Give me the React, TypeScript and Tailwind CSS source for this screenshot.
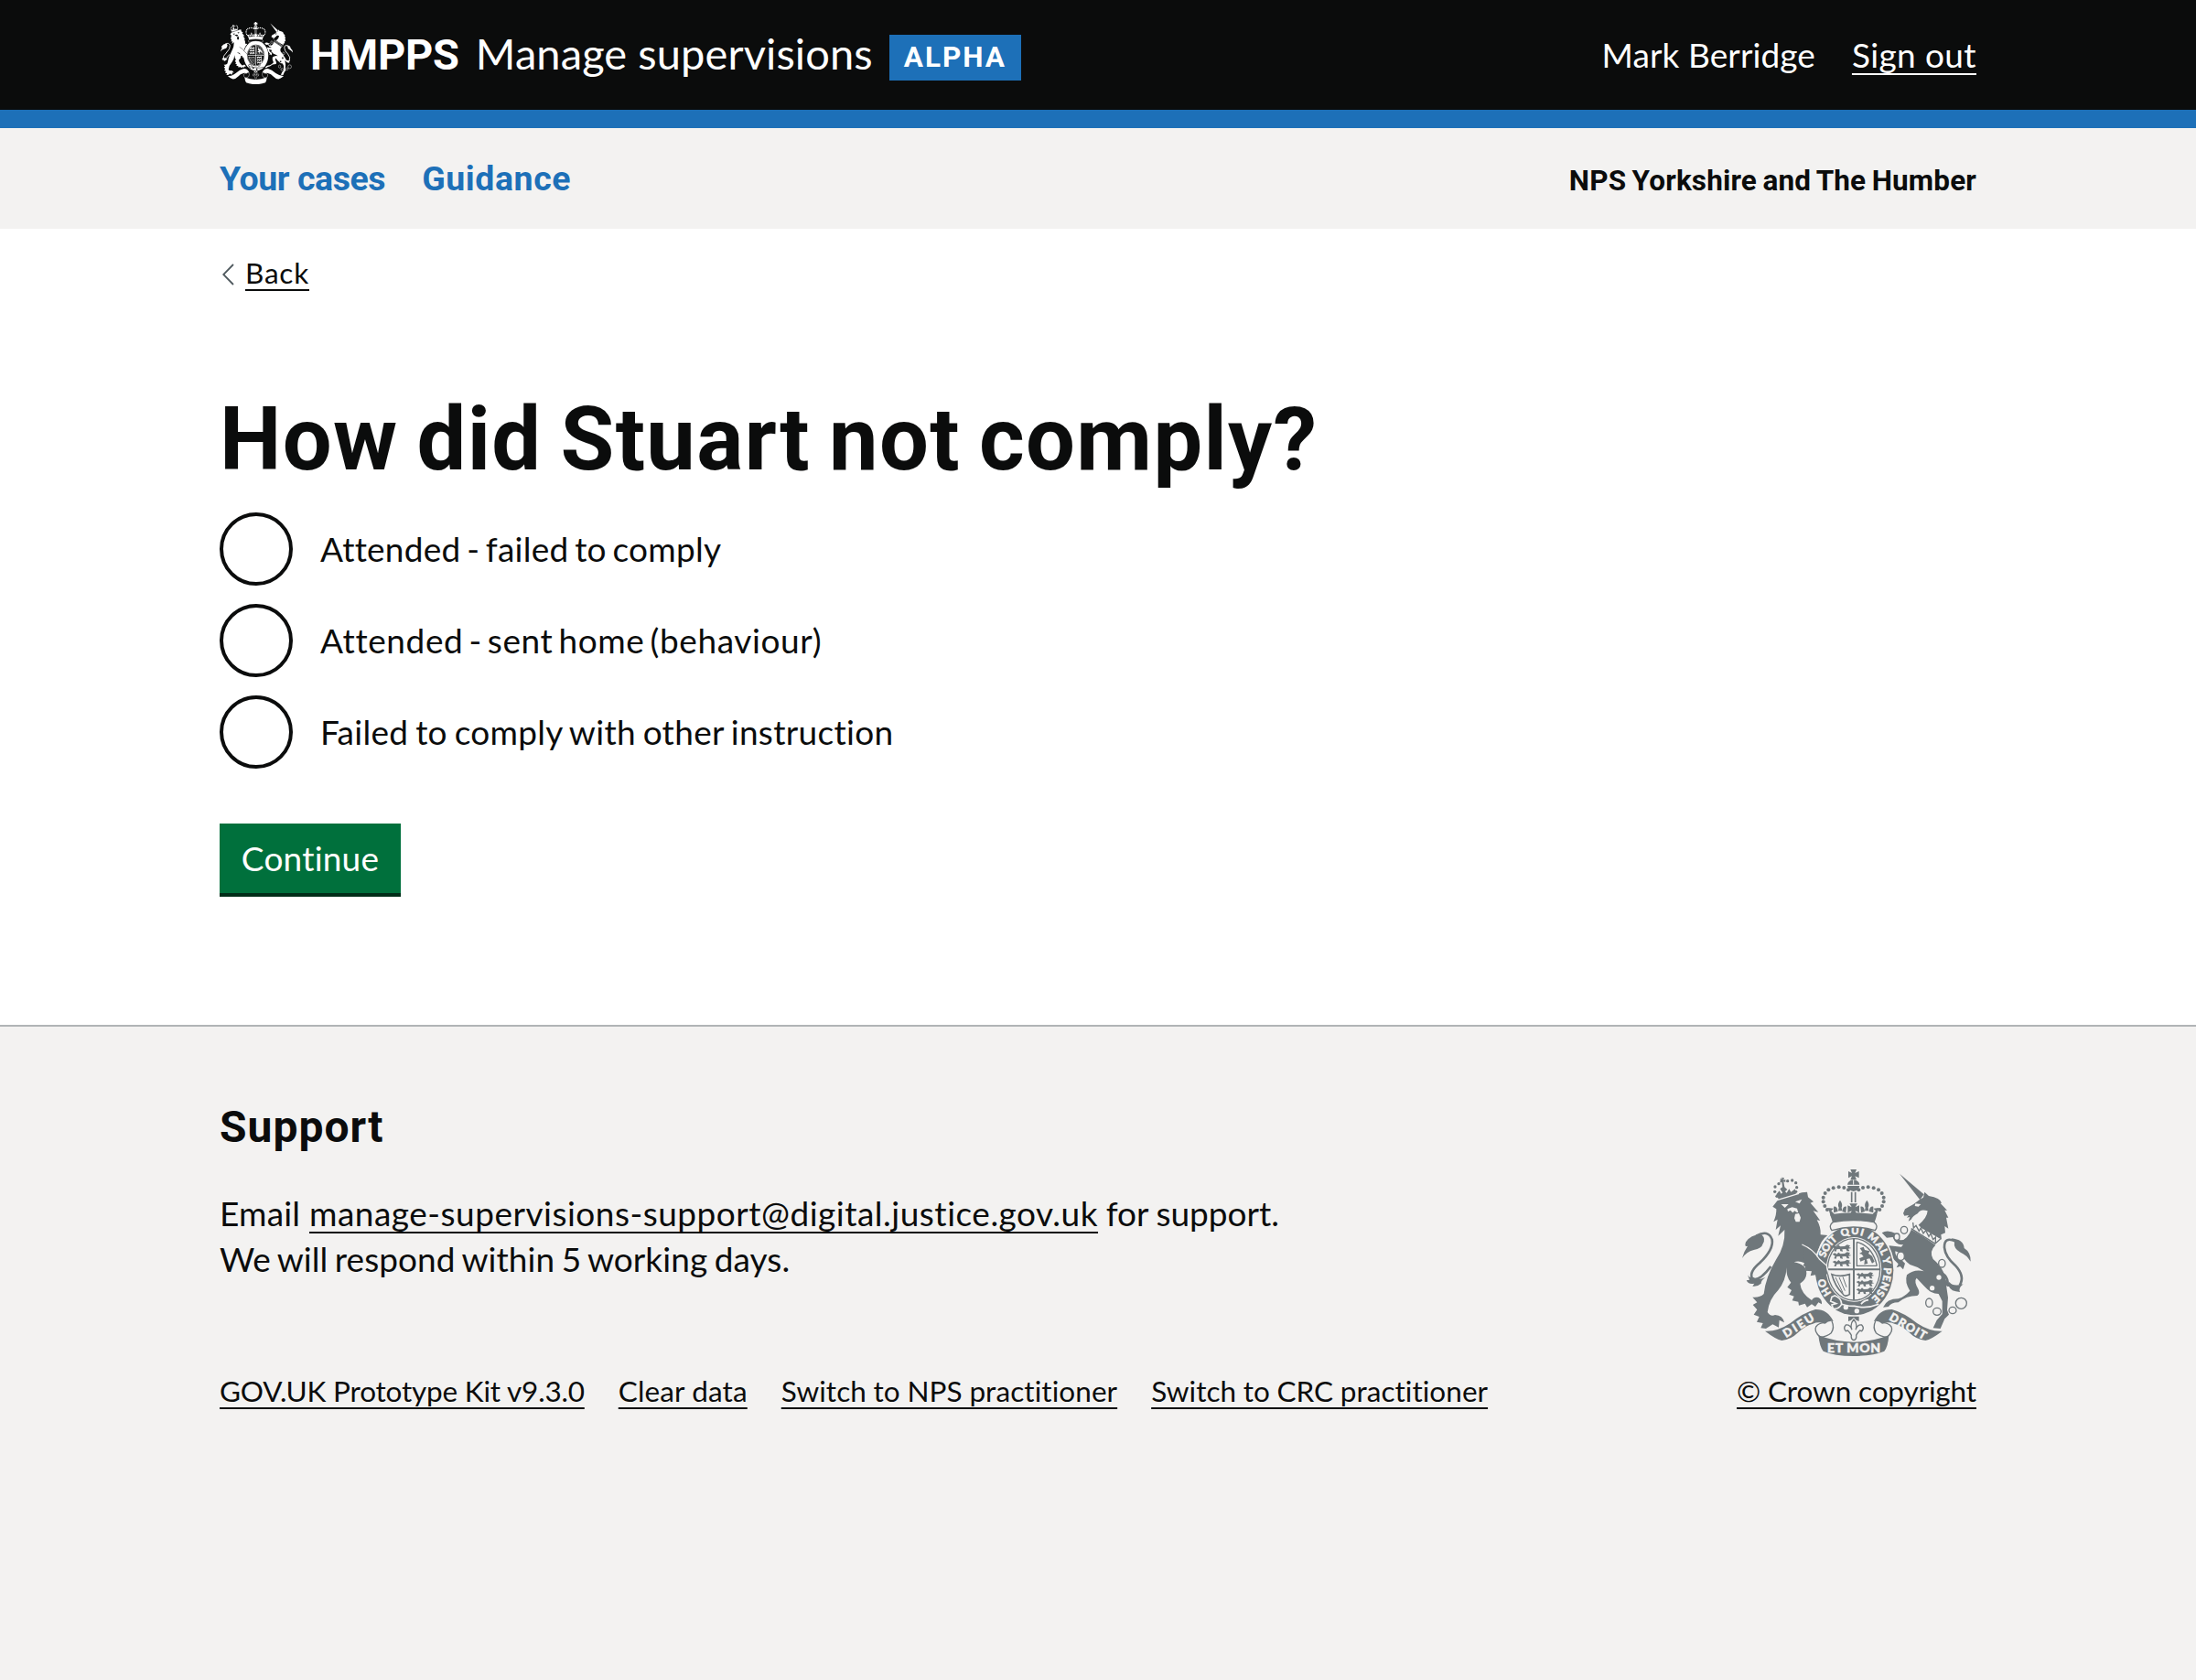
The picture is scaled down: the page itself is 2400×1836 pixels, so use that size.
import React from "react";

const LATO = "font-['Lato',sans-serif] [font-variant-ligatures:none]";
const ROBOTO = "font-['Roboto',sans-serif] font-bold";
const LINK = "underline decoration-2 underline-offset-[6px] [text-decoration-skip-ink:none]";

const ARCH_BEADS: [number, number][] = [
  [420, 121], [406, 114], [389, 112], [371, 115], [355, 121], [344, 132], [338, 146], [338, 160], [343, 174], [351, 186],
];
const SMALL_BEADS: [number, number][] = [
  [186, 142], [179, 127], [180, 111], [192, 101], [221, 92], [236, 90], [248, 98], [251, 113], [248, 127],
];

function Passant({ y }: { y: number }) {
  return (
    <path
      transform={`translate(0 ${y})`}
      d="M0 8 L8 4 L14 8 L20 2 L26 7 L40 6 L48 1 L58 4 L54 9 L62 12 L52 14 L56 22 L48 22 L44 15 L32 16 L34 23 L26 22 L24 15 L14 16 L12 23 L5 22 L9 14 Z"
    />
  );
}

function HalfCrown() {
  return (
    <g>
      {ARCH_BEADS.map(([x, y]) => (
        <circle key={`${x}-${y}`} cx={x} cy={y} r="6" />
      ))}
      <path d="M393 155 Q403 168 398 179 L400 190 L387 190 L389 179 Q383 168 393 155Z" />
      <path d="M372 176 Q384 174 386 192 L372 196Z M414 176 Q402 174 400 192 L412 196Z" />
      <path d="M354 180 L372 182 L364 190 L374 200 L362 206Z" />
    </g>
  );
}

function HalfRibbon({ fg, bg }: { fg: string; bg: string }) {
  return (
    <g>
      <path
        d="M366 552 Q376 572 364 590 Q350 602 328 604 Q306 584 314 570 Q324 556 344 557"
        fill={bg}
        stroke={fg}
        strokeWidth="4"
      />
      <path
        fill={fg}
        d="M147 584 Q188 586 230 558 Q272 524 312 513 Q352 512 371 552 Q356 548 344 560 Q322 552 304 560 Q280 566 256 588 Q232 612 202 615 Q184 612 147 584Z"
      />
    </g>
  );
}

function Crest({ fg, bg, lettered, className }: { fg: string; bg: string; lettered: boolean; className: string }) {
  const id = lettered ? "garter-lettered" : "garter-plain";
  return (
    <svg
      className={className}
      viewBox={lettered ? "60 45 780 630" : "72 54 750 611"}
      preserveAspectRatio="none"
      fill={fg}
      aria-hidden="true"
    >
      <defs>
        <path id={id} d="M438 497 A99 115 0 0 1 438 267 A99 115 0 0 1 438 497" />
      </defs>

      {/* small crown on the lion */}
      {SMALL_BEADS.map(([x, y]) => (
        <circle key={`${x}-${y}`} cx={x} cy={y} r="5" />
      ))}
      <path d="M198 82 L203 88 L202 80 L210 82 L207 89 L214 87 L214 96 L208 94 L211 112 L220 120 L206 132 L196 118 L204 112 L202 95 L196 98Z" />
      <path d="M184 136 L194 124 L200 134 L210 124 L218 131 L226 118 L232 128 L246 118 L247 132 L254 138 L192 153Z" />

      {/* lion */}
      <path d="M172 176 L190 153 L268 130 L285 128 L288 145 L306 160 L296 164 L322 194 L305 190 L328 222 L317 220 Q331 244 329 268 L352 270 Q330 286 322 318 L300 380 L280 386 L288 374 L272 370 L276 361 Q258 352 242 358 Q284 366 283 395 Q282 415 262 428 Q265 460 300 483 Q308 470 322 474 Q334 480 333 496 L322 490 L312 504 L300 496 L285 506 L278 494 L258 500 L256 488 L236 484 L242 470 L226 464 L234 450 L220 440 L232 425 Q215 405 218 376 Q215 420 190 450 Q160 480 155 522 Q165 538 180 531 Q205 532 210 556 L194 548 L192 572 L172 562 L150 576 L133 574 L140 558 L120 554 L128 537 L110 530 L121 514 L107 498 L121 490 L106 473 Q130 475 143 462 Q150 405 182 352 Q214 305 211 252 L190 272 L198 238 L182 252 L188 218 L175 226 Q185 202 184 184 Z" />
      <path fill="none" stroke={bg} strokeWidth="4" d="M186 155 L258 133" />
      <path fill={bg} d="M200 168 L224 168 L212 180Z M246 160 L268 152 L260 166Z M220 184 L236 178 L252 182 L256 196 L250 194 L244 190 L238 196 L230 188 L222 192Z M246 200 L258 198 L264 212 L260 226 L248 226 L243 214Z" />
      <path fill="none" stroke={fg} strokeWidth="8" d="M118 272 Q158 250 170 284 Q176 316 130 360 Q92 392 106 414 Q130 420 166 372" />
      <path d="M72 345 Q78 322 90 305 Q78 310 84 292 Q102 266 136 268 Q150 282 140 298 Q136 314 110 318 Q86 324 72 345Z" />
      <path d="M90 400 Q96 412 110 408 Q122 420 148 408 Q134 418 134 428 Q120 440 106 437 L112 428 Q92 432 86 418 L96 416Z" />

      {/* unicorn */}
      <path d="M588 68 L668 136 L655 154Z" />
      <path d="M655 152 L666 146 L670 128 L684 141 Q722 148 726 164 L722 165 L744 188 L736 188 L748 212 L741 212 L748 248 L736 240 L738 262 L724 268 L726 284 L662 248 L650 236 Q678 214 680 190 Q656 182 648 198 Q632 206 626 218 L617 224 L622 210 L612 212 L618 204 L604 206 L600 198 L606 184 Q634 170 655 152Z" />
      <path fill={bg} d="M640 166 L658 168 L650 176 L638 174Z" />
      <path d="M628 248 L706 302 Q684 322 698 348 Q742 384 742 440 L747 474 L744 515 L750 530 L736 544 L722 576 L698 574 L710 548 L728 528 L728 486 L716 462 Q690 462 668 436 L644 410 Q634 420 650 448 Q656 462 646 468 Q610 468 584 490 Q560 490 552 504 L534 506 Q546 478 584 478 Q606 470 622 452 Q604 424 612 400 Q636 380 668 388 Q646 372 622 366 Q596 346 600 332 L574 322 Q572 340 594 350 L606 362 L600 382 L590 372 L578 376 L584 364 Q554 336 552 318 L554 304 L594 308 L600 300 Q576 304 566 276 L546 278 L530 262 Q548 250 576 264 L590 286 Q612 288 628 248Z" />
      <path d="M628 228 L724 284 L714 302 L624 250Z" fill={bg} />
      <path fill="none" stroke={fg} strokeWidth="4" d="M626 248 L706 298 M632 228 L634 246 L642 238 L652 256 L658 246 L666 264 L674 254 L684 274 L690 264 L698 284 L706 276 L706 296 L722 282" />
      <path fill="none" stroke={fg} strokeWidth="8" d="M772 290 Q734 272 735 310 Q738 340 770 368 Q804 404 785 434" />
      <path d="M758 280 Q798 284 800 312 Q822 326 821 356 Q808 334 788 326 Q764 314 768 292Z" />
      <path d="M734 398 Q736 424 752 424 Q764 440 797 430 Q780 444 786 456 Q756 454 750 438 Q732 438 734 398Z" />
      <path fill="none" stroke={fg} strokeWidth="8" d="M728 395 Q744 405 746 424" />

      {/* chain */}
      <g fill={bg} stroke={fg} strokeWidth="4">
        <ellipse cx="603" cy="253" rx="11" ry="12" />
        <ellipse cx="579" cy="275" rx="9" ry="11" />
        <ellipse cx="592" cy="338" rx="12" ry="14" />
        <ellipse cx="727" cy="362" rx="11" ry="13" />
        <ellipse cx="717" cy="408" rx="10" ry="10" />
        <ellipse cx="695" cy="443" rx="10" ry="10" />
        <ellipse cx="685" cy="491" rx="11" ry="14" />
        <ellipse cx="711" cy="520" rx="13" ry="12" />
        <ellipse cx="762" cy="516" rx="12" ry="11" />
        <circle cx="790" cy="493" r="18" />
      </g>

      {/* garter and shield */}
      <ellipse cx="440" cy="385" rx="133" ry="152" fill={bg} />
      <ellipse cx="440" cy="385" rx="128" ry="147" />
      <ellipse cx="438" cy="382" rx="91" ry="106" fill={bg} />
      <ellipse cx="438" cy="382" rx="86" ry="101" fill="none" stroke={fg} strokeWidth="4" />
      <path fill="none" stroke={fg} strokeWidth="6" d="M438 280 V482 M352 382 H524" />
      <g transform="translate(368 0)"><Passant y={300} /><Passant y={324} /><Passant y={349} /></g>
      <g transform="translate(446 0) scale(.95 1)"><Passant y={390} /><Passant y={415} /><Passant y={440} /></g>
      <path fill="none" stroke={fg} strokeWidth="4" d="M448 292 V370 H514 M448 292 Q500 306 514 370" />
      <path d="M458 312 L470 308 L474 318 L490 322 L486 330 L498 338 L506 356 L498 362 L490 346 L480 348 L484 362 L472 366 L474 350 L460 356 L456 346 L470 340 L464 332 L456 330 L466 324Z" />
      <path fill="none" stroke={fg} strokeWidth="5" d="M366 398 Q392 408 424 398 V464 Q408 474 402 462 Q376 436 366 398Z" />
      <path fill="none" stroke={fg} strokeWidth="3" d="M378 408 L402 458 M390 408 L409 452 M402 406 L414 440" />
      <path fill="none" stroke={bg} strokeWidth="5" d="M462 496 Q470 484 486 482 M374 488 Q420 504 440 502 Q480 512 520 496" />
      <path fill={fg} stroke={bg} strokeWidth="5" d="M376 468 Q398 476 398 496 Q388 514 370 510 L366 498 L380 494 L362 486 L366 472Z" />
      <circle cx="412" cy="506" r="8" fill={bg} />
      <circle cx="448" cy="518" r="8" fill={bg} />
      {lettered && (
        <g fill={bg} stroke={bg} strokeWidth="1.5" className="font-['Lato',sans-serif] text-[34px] font-black">
          <text><textPath href={`#${id}`} startOffset="84" textLength="56">HO</textPath></text>
          <text><textPath href={`#${id}`} startOffset="206" textLength="74">SOIT</textPath></text>
          <text><textPath href={`#${id}`} startOffset="296" textLength="70">QUI</textPath></text>
          <text><textPath href={`#${id}`} startOffset="381" textLength="78">MAL</textPath></text>
          <text><textPath href={`#${id}`} startOffset="466" textLength="22">Y</textPath></text>
          <text><textPath href={`#${id}`} startOffset="498" textLength="112">PENSE</textPath></text>
        </g>
      )}

      {/* lion's forearm, in front of the garter */}
      <path d="M270 302 Q306 318 324 350 L346 370 L353 398 L343 396 L345 411 L331 406 L318 416 L312 400 L296 403 L300 388 L280 386Z" />
      <path fill="none" stroke={bg} strokeWidth="4" d="M268 300 Q306 316 325 348 L349 369 L356 398" />

      {/* royal crown */}
      <path d="M427 54 H447 L442 66 L455 60 V82 L442 76 L447 88 H427 L432 76 L420 82 V60 L432 66Z" />
      <path d="M437 88 Q455 90 457 104 H417 Q419 90 437 88Z M417 108 H457 Q454 124 437 126 Q420 124 417 108Z" />
      <path fill="none" stroke={bg} strokeWidth="3" d="M437 88 V104" />
      <HalfCrown />
      <g transform="translate(874 0) scale(-1 1)"><HalfCrown /></g>
      <path fill="none" stroke={fg} strokeWidth="5" d="M431 128 V162 M443 128 V162" />
      <path d="M424 166 H450 L443 178 L456 172 V196 L443 190 L448 202 H426 L431 190 L418 196 V172 L431 178Z" />
      <path d="M360 202 Q437 190 514 202 Q510 218 504 232 Q437 216 370 232 Q366 218 360 202Z" />
      <path fill={bg} stroke={fg} strokeWidth="4" d="M370 227 Q437 214 504 227 Q520 238 508 254 Q437 232 366 254 Q354 238 370 227Z" />

      {/* motto ribbon */}
      <HalfRibbon fg={fg} bg={bg} />
      <g transform="translate(875 0) scale(-1 1)"><HalfRibbon fg={fg} bg={bg} /></g>
      <path d="M322 598 Q437 642 553 598 Q550 636 538 650 Q500 666 437 666 Q374 666 338 650 Q326 636 322 598Z" />
      {lettered && (
        <g fill={bg} stroke={bg} strokeWidth="1.5" className="font-['Lato',sans-serif] font-black">
          <text className="text-[38px]" textLength="112" transform="translate(216 607) rotate(-32)">DIEU</text>
          <text className="text-[38px]" textLength="134" transform="translate(551 546) rotate(30)">DROIT</text>
          <text className="text-[42px]" x="351" y="655" textLength="174">ET MON</text>
        </g>
      )}
      <path d="M420 536 H455 V552 L446 548 L438 540 L429 548 L420 552Z" />
      <path
        fill={bg}
        stroke={fg}
        strokeWidth="4"
        d="M438 546 Q452 562 444 580 Q450 562 464 564 Q474 574 464 584 L458 582 Q448 592 446 598 Q448 612 438 614 Q428 612 430 598 Q428 592 418 582 L412 584 Q402 574 412 564 Q426 562 432 580 Q424 562 438 546Z"
      />
    </svg>
  );
}

function RadioOption({ label, spacing }: { label: string; spacing: string }) {
  return (
    <label className="flex items-center gap-[30px]">
      <span className="size-20 shrink-0 rounded-full border-4 border-[#0b0c0c] bg-white" />
      <span className={`${LATO} text-[37px] leading-[50px] ${spacing}`}>{label}</span>
    </label>
  );
}

export default function App() {
  return (
    <div className="flex min-h-[1836px] w-[2400px] flex-col bg-white text-[#0b0c0c]">
      <header className="border-b-[20px] border-[#1d70b8] bg-[#0b0c0c] text-white">
        <div className="mx-auto flex h-[120px] w-[1920px] items-center whitespace-nowrap">
          <Crest fg="#ffffff" bg="#0b0c0c" lettered={false} className="mb-[5px] ml-px h-[68px] w-[79px]" />
          <span className={`${ROBOTO} ml-[19px] text-[47px] leading-[60px] tracking-[-0.2px]`}>HMPPS</span>
          <span className={`${LATO} ml-[18px] pb-[4px] text-[47px] leading-[60px] tracking-[0.1px]`}>Manage supervisions</span>
          <strong className={`${ROBOTO} mt-[6px] ml-[18px] h-[50px] w-[144px] bg-[#1d70b8] pl-[16px] text-[31.5px] leading-[50px] tracking-[2px]`}>
            ALPHA
          </strong>
          <div className={`${LATO} ml-auto flex gap-[40px] text-[37px] leading-[50px]`}>
            <span className="tracking-[0.1px]">Mark Berridge</span>
            <a className={`${LINK} tracking-[0.38px]`}>Sign out</a>
          </div>
        </div>
      </header>

      <nav className="bg-[#f3f2f1]">
        <div className={`${ROBOTO} mx-auto flex h-[110px] w-[1920px] items-center whitespace-nowrap`}>
          <a className="text-[37.5px] leading-[50px] tracking-[-0.45px] text-[#1d70b8]">Your cases</a>
          <a className="ml-[40px] text-[37.5px] leading-[50px] tracking-[0.55px] text-[#1d70b8]">Guidance</a>
          <span className="ml-auto pt-[5px] text-[31.5px] leading-[40px] tracking-[0.15px] [word-spacing:-1.6px]">
            NPS Yorkshire and The Humber
          </span>
        </div>
      </nav>

      <main className="mx-auto flex h-[870px] w-[1920px] flex-col items-start">
        <a className="mt-[28px] flex h-[40px] items-center">
          <svg className="mt-[4px] ml-[3px] h-[24px] w-[13px]" viewBox="0 0 13 24" fill="none" stroke="#505a5f" strokeWidth="1.8">
            <path d="M12 1 L1.2 12 L12 23" />
          </svg>
          <span className={`${LATO} ${LINK} ml-[12px] text-[31.5px] leading-[40px] tracking-[0.8px]`}>Back</span>
        </a>
        <h1 className={`${ROBOTO} mt-[112px] text-[95.5px] leading-[100px] tracking-[1.35px] [word-spacing:-5px] whitespace-nowrap`}>
          How did Stuart not comply?
        </h1>
        <div className="mt-[30px] flex flex-col gap-5">
          <RadioOption label="Attended - failed to comply" spacing="tracking-[0.24px] [word-spacing:-3px]" />
          <RadioOption label="Attended - sent home (behaviour)" spacing="tracking-[0.6px] [word-spacing:-4px]" />
          <RadioOption label="Failed to comply with other instruction" spacing="tracking-[0.3px] [word-spacing:-2px]" />
        </div>
        <button className={`${LATO} mt-[60px] h-[76px] w-[198px] bg-[#00703c] text-[37px] leading-[50px] tracking-[0.2px] text-white shadow-[0_4px_0_#002d18]`}>
          Continue
        </button>
      </main>

      <footer className="flex-1 border-t-2 border-[#b1b4b6] bg-[#f3f2f1]">
        <div className="mx-auto flex w-[1920px] items-end justify-between pt-[80px] whitespace-nowrap">
          <div>
            <h2 className={`${ROBOTO} text-[48px] leading-[60px] tracking-[1px]`}>Support</h2>
            <p className={`${LATO} mt-[39px] text-[37px] leading-[50px]`}>
              <span className="tracking-[0.2px]">Email </span>
              <a className={`${LINK} tracking-[0.5px]`}>manage-supervisions-support@digital.justice.gov.uk</a>
              <span className="[word-spacing:-0.8px]"> for support.</span>
              <br />
              <span className="tracking-[0.06px] [word-spacing:-2px]">We will respond within 5 working days.</span>
            </p>
            <div className={`${LATO} mt-[99px] flex gap-[37px] text-[31.5px] leading-[40px]`}>
              <a className={`${LINK} tracking-[-0.2px]`}>GOV.UK Prototype Kit v9.3.0</a>
              <a className={`${LINK} tracking-[0.13px]`}>Clear data</a>
              <a className={`${LINK} tracking-[0.08px] [word-spacing:-0.5px]`}>Switch to NPS practitioner</a>
              <a className={`${LINK} tracking-[0.04px] [word-spacing:-0.5px]`}>Switch to CRC practitioner</a>
            </div>
          </div>
          <div className="flex flex-col items-end">
            <Crest fg="#6f777b" bg="#f3f2f1" lettered className="h-[210px] w-[260px]" />
            <a className={`${LATO} ${LINK} mt-[15px] text-[31.5px] leading-[40px] tracking-[-0.13px]`}>© Crown copyright</a>
          </div>
        </div>
      </footer>
    </div>
  );
}
